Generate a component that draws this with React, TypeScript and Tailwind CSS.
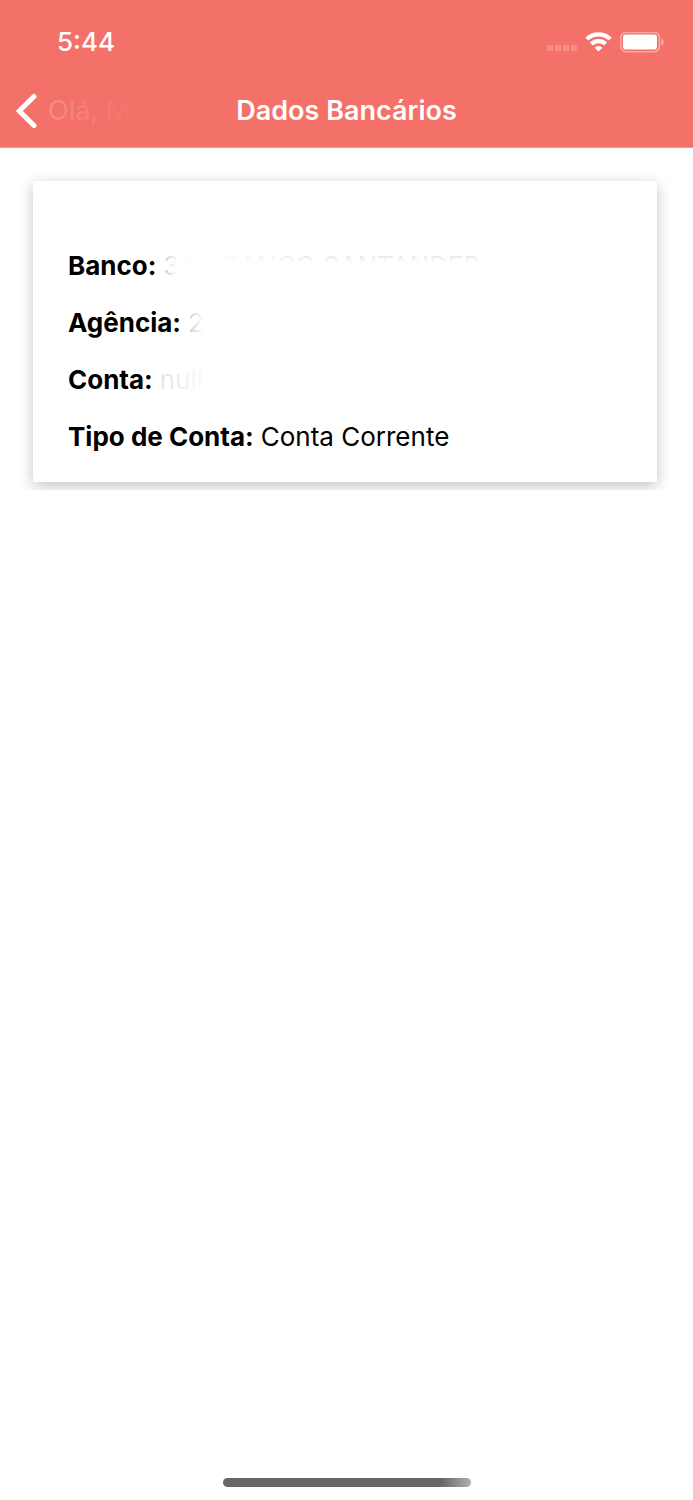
interface BankField {
  label: string;
  value: string;
  valueClass: string;
}

const fields: BankField[] = [
  {
    label: 'Banco',
    value: '33 - BANCO SANTANDER',
    valueClass:
      'bg-[linear-gradient(90deg,#c8c8c8_0px,#ffffff_14px,#ffffff_50px,#ffffff00_140px),linear-gradient(180deg,#dadada_25%,#ffffff_46%)] bg-clip-text text-transparent',
  },
  {
    label: 'Agência',
    value: '2',
    valueClass: 'bg-linear-to-r from-[#cccccc] to-white bg-clip-text text-transparent',
  },
  {
    label: 'Conta',
    value: 'null',
    valueClass: 'bg-linear-to-r from-[#e4e4e4] to-[#fafafa] bg-clip-text text-transparent',
  },
  { label: 'Tipo de Conta', value: 'Conta Corrente', valueClass: 'text-black' },
];

function StatusBar() {
  return (
    <div className="flex h-[84px] items-center justify-between pr-[29px] pl-[57px]">
      <span className="text-[26px] leading-8 font-medium">5:44</span>
      <div className="flex items-center gap-2">
        <div className="flex gap-[2px] pt-3">
          <span className="size-[6px] rounded-[1px] bg-white/20" />
          <span className="size-[6px] rounded-[1px] bg-white/20" />
          <span className="size-[6px] rounded-[1px] bg-white/20" />
          <span className="size-[6px] rounded-[1px] bg-white/20" />
        </div>
        <svg className="h-5 w-[27px]" viewBox="0 0 27 20" fill="none" stroke="white" strokeWidth="4.4" aria-label="Wi-Fi">
          <path d="M1.8 7a17 17 0 0 1 23.4 0" />
          <path d="M6.4 12a10.2 10.2 0 0 1 14.2 0" />
          <path d="M13.5 19.6l-3.9-3.9a5.6 5.6 0 0 1 7.8 0z" fill="white" stroke="none" />
        </svg>
        <svg className="h-[21px] w-[44px]" viewBox="0 0 44 21" aria-label="Bateria">
          <rect x="0.8" y="0.4" width="38.6" height="19.4" rx="5.5" fill="none" stroke="white" strokeOpacity="0.4" strokeWidth="1.6" />
          <rect x="3" y="2.6" width="34" height="15" rx="3" fill="white" />
          <path d="M41.4 6.6c3 1 3 6 0 7z" fill="white" fillOpacity="0.45" />
        </svg>
      </div>
    </div>
  );
}

function NavBar() {
  return (
    <nav className="grid h-[63px] grid-cols-[1fr_auto_1fr] items-center px-4 pb-[10px]">
      <button type="button" className="flex items-center gap-[10px] text-[27px] leading-8" aria-label="Voltar">
        <svg className="h-[36px] w-[22px]" viewBox="0 0 22 36" fill="none" stroke="white" strokeWidth="5" strokeLinecap="round" strokeLinejoin="miter">
          <path d="M18 3.4L3.3 18L18 32.6" />
        </svg>
        <span className="bg-linear-to-r from-white/20 to-white/0 bg-clip-text text-transparent">Olá, Mi</span>
      </button>
      <h1 className="text-[27px] leading-8 font-semibold">Dados Bancários</h1>
    </nav>
  );
}

export default function App() {
  return (
    <div className="flex min-h-screen flex-col bg-white font-['Inter','Liberation_Sans',sans-serif]">
      <header className="border-b border-[#c9aaa8] bg-[#f47169] text-white">
        <StatusBar />
        <NavBar />
      </header>

      <main className="grow">
        {/* The wrapper cuts the card shadow just below its lower edge */}
        <div className="overflow-hidden pt-[33px] pr-9 pb-2 pl-[33px]">
          <dl className="bg-white px-[35px] pt-14 pb-[17px] text-[26px] leading-[57px] text-black shadow-[0_4px_14px_rgba(0,0,0,0.24)]">
            {fields.map((field) => (
              <div key={field.label} className="flex gap-[7px]">
                <dt className="font-bold">{field.label}:</dt>
                <dd className={field.valueClass}>{field.value}</dd>
              </div>
            ))}
          </dl>
        </div>
      </main>

      <footer className="flex justify-center pb-[13px]">
        <div className="h-[9px] w-[248px] rounded-full bg-[linear-gradient(90deg,#666666_88%,#b0b0b0)]" />
      </footer>
    </div>
  );
}
